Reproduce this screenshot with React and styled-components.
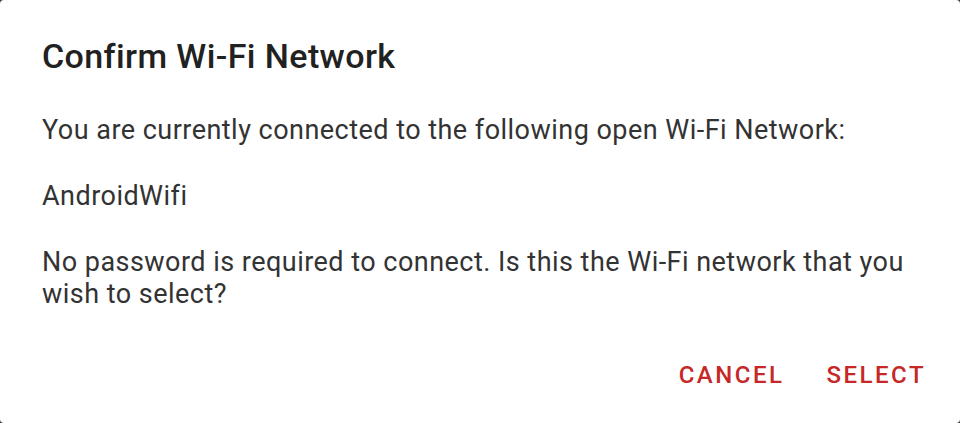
import React from "react";
import styled, { createGlobalStyle } from "styled-components";

const Global = createGlobalStyle`
  html, body {
    margin: 0;
    padding: 0;
    background: #3a3a3a;
  }
  body {
    font-family: Roboto, "Noto Sans", sans-serif;
  }
`;

const Dialog = styled.div`
  width: 960px;
  height: 423px;
  box-sizing: border-box;
  background: #ffffff;
  border-radius: 4px;
  padding: 36px 42px 0 42px;
  display: flex;
  flex-direction: column;
`;

const Title = styled.h1`
  margin: 0;
  font-size: 34px;
  font-weight: 500;
  letter-spacing: 0.4px;
  line-height: 40px;
  color: #212121;
`;

const Body = styled.div`
  margin-top: 38px;
  display: flex;
  flex-direction: column;
  gap: 34px;
`;

const Text = styled.p`
  margin: 0;
  font-size: 27px;
  letter-spacing: 0.47px;
  line-height: 32px;
  color: #333333;
  max-width: 876px;
`;

const Actions = styled.div`
  margin-top: auto;
  margin-bottom: 28px;
  margin-right: -16px;
  display: flex;
  justify-content: flex-end;
  gap: 26px;
`;

const Action = styled.button`
  border: none;
  background: none;
  padding: 6px 8px;
  font-family: Roboto, sans-serif;
  font-size: 24px;
  font-weight: 500;
  letter-spacing: 2.5px;
  color: #c62828;
  cursor: pointer;
`;

export default function App() {
  return (
    <>
      <Global />
      <Dialog>
        <Title>Confirm Wi-Fi Network</Title>
        <Body>
          <Text>You are currently connected to the following open Wi-Fi Network:</Text>
          <Text>AndroidWifi</Text>
          <Text>No password is required to connect. Is this the Wi-Fi network that you wish to select?</Text>
        </Body>
        <Actions>
          <Action>CANCEL</Action>
          <Action>SELECT</Action>
        </Actions>
      </Dialog>
    </>
  );
}
